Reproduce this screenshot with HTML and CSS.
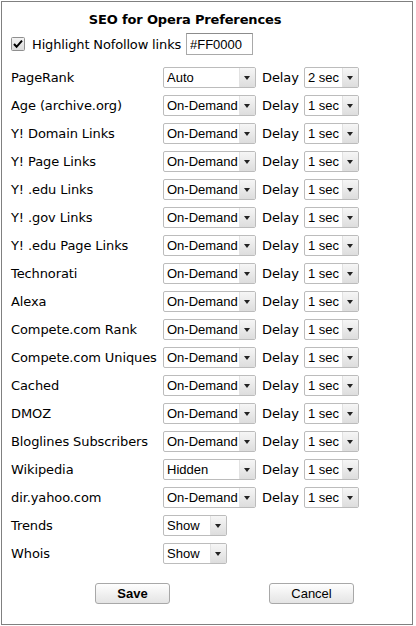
FILE: index.html
```html
<!DOCTYPE html>
<html>
<head>
<meta charset="utf-8">
<title>SEO for Opera Preferences</title>
<link rel="stylesheet" href="styles.css">
</head>
<body>
<div class="frame">
  <div class="content">
    <h1 class="title">SEO for Opera Preferences</h1>
    <div class="highlight">
      <span class="check"><svg width="14" height="14" viewBox="0 0 14 14"><defs><linearGradient id="cb" x1="0" y1="0" x2="0" y2="1"><stop offset="0" stop-color="#f4f4f4"/><stop offset="1" stop-color="#dadada"/></linearGradient></defs><rect x="0.5" y="0.5" width="13" height="13" rx="1" fill="url(#cb)" stroke="#8f8f8f"/><path d="M3 7 L5.6 9.8 L11 3.6" fill="none" stroke="#000" stroke-width="2"/></svg></span>
      <span class="hl-label">Highlight Nofollow links</span>
      <input class="color" type="text" value="#FF0000">
    </div>
    <div class="rows">
      <div class="row"><span class="label">PageRank</span><span class="sel"><select><option>Auto</option></select></span><span class="delay">Delay</span><span class="sel"><select><option>2 sec</option></select></span></div>
      <div class="row"><span class="label">Age (archive.org)</span><span class="sel"><select><option>On-Demand</option></select></span><span class="delay">Delay</span><span class="sel"><select><option>1 sec</option></select></span></div>
      <div class="row"><span class="label">Y! Domain Links</span><span class="sel"><select><option>On-Demand</option></select></span><span class="delay">Delay</span><span class="sel"><select><option>1 sec</option></select></span></div>
      <div class="row"><span class="label">Y! Page Links</span><span class="sel"><select><option>On-Demand</option></select></span><span class="delay">Delay</span><span class="sel"><select><option>1 sec</option></select></span></div>
      <div class="row"><span class="label">Y! .edu Links</span><span class="sel"><select><option>On-Demand</option></select></span><span class="delay">Delay</span><span class="sel"><select><option>1 sec</option></select></span></div>
      <div class="row"><span class="label">Y! .gov Links</span><span class="sel"><select><option>On-Demand</option></select></span><span class="delay">Delay</span><span class="sel"><select><option>1 sec</option></select></span></div>
      <div class="row"><span class="label">Y! .edu Page Links</span><span class="sel"><select><option>On-Demand</option></select></span><span class="delay">Delay</span><span class="sel"><select><option>1 sec</option></select></span></div>
      <div class="row"><span class="label">Technorati</span><span class="sel"><select><option>On-Demand</option></select></span><span class="delay">Delay</span><span class="sel"><select><option>1 sec</option></select></span></div>
      <div class="row"><span class="label">Alexa</span><span class="sel"><select><option>On-Demand</option></select></span><span class="delay">Delay</span><span class="sel"><select><option>1 sec</option></select></span></div>
      <div class="row"><span class="label">Compete.com Rank</span><span class="sel"><select><option>On-Demand</option></select></span><span class="delay">Delay</span><span class="sel"><select><option>1 sec</option></select></span></div>
      <div class="row"><span class="label">Compete.com Uniques</span><span class="sel"><select><option>On-Demand</option></select></span><span class="delay">Delay</span><span class="sel"><select><option>1 sec</option></select></span></div>
      <div class="row"><span class="label">Cached</span><span class="sel"><select><option>On-Demand</option></select></span><span class="delay">Delay</span><span class="sel"><select><option>1 sec</option></select></span></div>
      <div class="row"><span class="label">DMOZ</span><span class="sel"><select><option>On-Demand</option></select></span><span class="delay">Delay</span><span class="sel"><select><option>1 sec</option></select></span></div>
      <div class="row"><span class="label">Bloglines Subscribers</span><span class="sel"><select><option>On-Demand</option></select></span><span class="delay">Delay</span><span class="sel"><select><option>1 sec</option></select></span></div>
      <div class="row"><span class="label">Wikipedia</span><span class="sel"><select><option>Hidden</option></select></span><span class="delay">Delay</span><span class="sel"><select><option>1 sec</option></select></span></div>
      <div class="row"><span class="label">dir.yahoo.com</span><span class="sel"><select><option>On-Demand</option></select></span><span class="delay">Delay</span><span class="sel"><select><option>1 sec</option></select></span></div>
      <div class="row"><span class="label">Trends</span><span class="sel short"><select><option>Show</option></select></span></div>
      <div class="row"><span class="label">Whois</span><span class="sel short"><select><option>Show</option></select></span></div>
    </div>
    <div class="buttons">
      <button class="btn save" type="button">Save</button>
      <button class="btn cancel" type="button">Cancel</button>
    </div>
  </div>
</div>
</body>
</html>
```
FILE: styles.css
```css
html, body {
  margin: 0;
  padding: 0;
  background: #fff;
}

.frame {
  box-sizing: border-box;
  margin: 1px 0 0 1px;
  width: 412px;
  height: 624px;
  border: 1px solid #808080;
  padding: 0 0 0 9px;
  font-family: "DejaVu Sans", Verdana, sans-serif;
  font-size: 13px;
  color: #000;
}

.content {
  width: 348px;
}

.title {
  margin: 0;
  padding-top: 10px;
  height: 16px;
  line-height: 16px;
  font-size: 13px;
  font-weight: bold;
  text-align: center;
  letter-spacing: -0.15px;
}

.highlight {
  display: flex;
  align-items: center;
  height: 26px;
  margin-top: 3px;
}

.check {
  display: block;
  width: 14px;
  height: 14px;
}

.check svg {
  display: block;
}

.hl-label {
  margin-left: 7px;
  width: 154px;
  white-space: nowrap;
  letter-spacing: -0.15px;
}

.color {
  box-sizing: border-box;
  width: 67px;
  height: 22px;
  margin: 0;
  padding: 0 0 0 3px;
  border: 1px solid #a9a9a9;
  border-top-color: #8c8c8c;
  font: 13px "Liberation Sans", Arial, sans-serif;
  color: #000;
  background: #fff;
}

.rows {
  margin-top: 6px;
}

.row {
  display: grid;
  grid-template-columns: 152px 93px 48px 55px;
  height: 28px;
  align-items: center;
}

.label {
  white-space: nowrap;
  letter-spacing: -0.1px;
}

.delay {
  padding-left: 6px;
  letter-spacing: -0.1px;
}

.sel {
  position: relative;
  display: block;
  height: 21px;
}

.sel.short {
  width: 64px;
}

.sel select {
  appearance: none;
  -webkit-appearance: none;
  display: block;
  box-sizing: border-box;
  width: 100%;
  height: 21px;
  margin: 0;
  padding: 0 0 0 3px;
  border: 1px solid #bcbcbc;
  border-radius: 2px;
  background: #fff;
  font: 13px "Liberation Sans", Arial, sans-serif;
  color: #000;
  outline: none;
}

.sel::after {
  content: "";
  position: absolute;
  top: 1px;
  right: 1px;
  bottom: 1px;
  width: 15px;
  border-left: 1px solid #e2e2e2;
  background: linear-gradient(#f6f6f6, #dddddd);
  border-radius: 0 1px 1px 0;
  pointer-events: none;
}

.sel::before {
  content: "";
  position: absolute;
  right: 6px;
  top: 9px;
  width: 0;
  height: 0;
  border-left: 3px solid transparent;
  border-right: 3px solid transparent;
  border-top: 4px solid #222;
  z-index: 1;
  pointer-events: none;
}

.buttons {
  display: flex;
  margin-top: 16px;
  padding-left: 84px;
}

.btn {
  box-sizing: border-box;
  height: 21px;
  margin: 0;
  padding: 0;
  border: 1px solid #a8a8a8;
  border-radius: 3px;
  background: linear-gradient(#fefefe, #e4e4e4);
  font: 13px "Liberation Sans", Arial, sans-serif;
  color: #000;
}

.save {
  width: 75px;
  font-weight: bold;
}

.cancel {
  width: 85px;
  margin-left: 99px;
}
```
